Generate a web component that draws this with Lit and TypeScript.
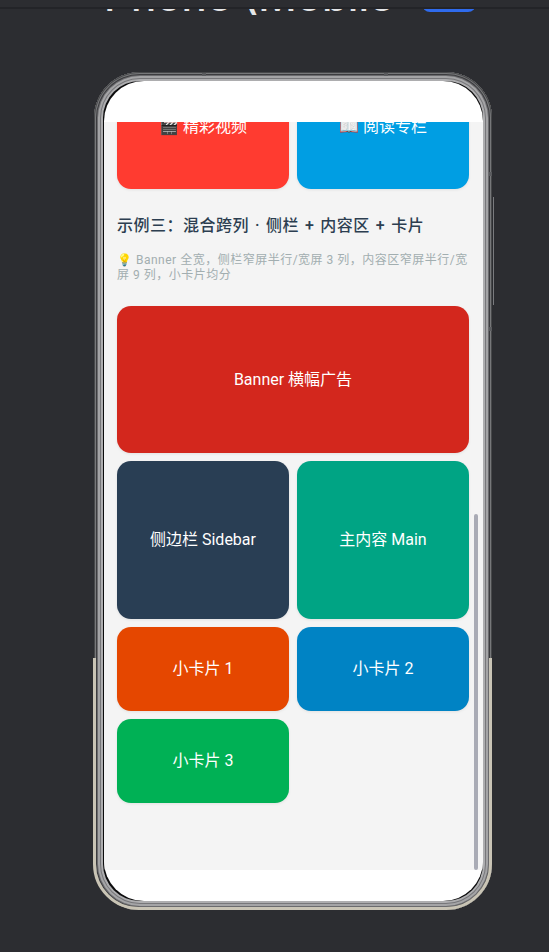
import { LitElement, html, css } from "lit";
import { customElement } from "lit/decorators.js";

@customElement("app-root")
export class AppRoot extends LitElement {
  static styles = css`
    :host { display: block; width: 549px; height: 952px; background: #2c2d31; overflow: hidden; font-family: "Roboto", "Noto Sans CJK SC", sans-serif; position: relative; }
    .head { height: 72px; overflow: hidden; position: relative; }
    .strip { height: 7px; background: #2c2d31; border-bottom: 2px solid #232428; position: relative; z-index: 2; }
    .titlebar { display: flex; align-items: flex-start; padding-left: 104px; margin-top: -33px; height: 40px; }
    .title { font-size: 42px; line-height: 40px; color: #e4e5e7; font-weight: 500; font-family: "Inter", sans-serif; white-space: nowrap; width: 318px; }
    .badge { width: 54px; height: 40px; background: #2f6bed; border-radius: 8px; margin-top: -4px; }
    .stage { padding-left: 94px; }
    .phone { width: 398px; height: 838px; box-sizing: border-box; padding: 9px 9px 9px 10px; border-radius: 46px; position: relative; background: #0c0c0d;
      box-shadow: inset 0 0 0 1px #47484a, inset 0 0 0 2px #77787a, inset 0 0 0 3px #3c3c3f, inset 0 0 0 4px #6b6b6e, inset 0 0 0 6px #a4a4a6, inset 0 0 0 7px #77777a, inset 0 0 0 9px #adadaf; }
    .trim { position: absolute; inset: 0 0 0 -1px; border: 3px solid #c9c4b5; border-radius: 46px; clip-path: inset(586px 0 0 0); pointer-events: none; }
    .mark { position: absolute; background: #5a5b5e; }
    .m1 { left: 108px; top: 1px; width: 4px; height: 3px; }
    .m2 { left: 290px; top: 1px; width: 4px; height: 3px; }
    .m3 { left: 395px; top: 100px; width: 3px; height: 4px; }
    .m4 { left: 395px; top: 255px; width: 3px; height: 4px; }
    .rail { position: absolute; left: 399px; top: 125px; width: 1px; height: 108px; background: #7a7b7e; }
    .screen { height: 100%; background: #fff; border-radius: 40px; display: flex; flex-direction: column; overflow: hidden; position: relative; }
    .top { height: 41px; flex: none; }
    .bottom { height: 31px; flex: none; }
    .scroll { flex: 1; min-height: 0; background: #f4f4f4; overflow: hidden; position: relative; }
    .content { margin-top: -57px; padding: 0 14px 0 13px; display: flex; flex-direction: column; }
    .grid { display: grid; grid-template-columns: 172px 172px; gap: 8px; }
    .card { color: #fff; border-radius: 14px; display: flex; align-items: center; justify-content: center; font-size: 16px; box-sizing: border-box; padding-bottom: 4px; box-shadow: 0 1px 3px rgba(0,0,0,.08); }
    .h-124 { height: 124px; }
    .h-147 { height: 147px; }
    .h-158 { height: 158px; }
    .h-84 { height: 84px; }
    .full { grid-column: 1 / -1; }
    .red { background: #ff3b30; }
    .blue { background: #009ee3; }
    .banner { background: #d3271d; }
    .side { background: #293e54; }
    .main { background: #00a484; }
    .orange { background: #e54700; }
    .azure { background: #0083c4; }
    .green { background: #00b155; }
    h3 { margin: 25px 0 0; font-size: 16px; line-height: 24px; font-weight: 500; letter-spacing: .5px; word-spacing: 1.5px; color: #2c3e50; }
    p { margin: 15px 0 23px; font-size: 12px; line-height: 15px; letter-spacing: .5px; color: #a2aeb0; }
    .thumb { position: absolute; right: 5px; top: 392px; width: 4px; height: 356px; border-radius: 2px; background: #a9abb5; }
  `;
  render() {
    return html`
      <div class="head">
        <div class="strip"></div>
        <div class="titlebar"><span class="title">Phone (Mobile</span><span class="badge"></span></div>
      </div>
      <div class="stage">
        <div class="phone">
          <div class="screen">
            <div class="top"></div>
            <div class="scroll">
              <div class="content">
                <div class="grid">
                  <div class="card red h-124">🎬 精彩视频</div>
                  <div class="card blue h-124">📖 阅读专栏</div>
                </div>
                <h3>示例三：混合跨列 · 侧栏 + 内容区 + 卡片</h3>
                <p>💡 Banner 全宽，侧栏窄屏半行/宽屏 3 列，内容区窄屏半行/宽屏 9 列，小卡片均分</p>
                <div class="grid">
                  <div class="card banner full h-147">Banner 横幅广告</div>
                  <div class="card side h-158">侧边栏 Sidebar</div>
                  <div class="card main h-158">主内容 Main</div>
                  <div class="card orange h-84">小卡片 1</div>
                  <div class="card azure h-84">小卡片 2</div>
                  <div class="card green h-84">小卡片 3</div>
                </div>
              </div>
              <div class="thumb"></div>
            </div>
            <div class="bottom"></div>
          </div>
          <div class="trim"></div>
          <div class="mark m1"></div><div class="mark m2"></div><div class="mark m3"></div><div class="mark m4"></div>
          <div class="rail"></div>
        </div>
      </div>
    `;
  }
}
